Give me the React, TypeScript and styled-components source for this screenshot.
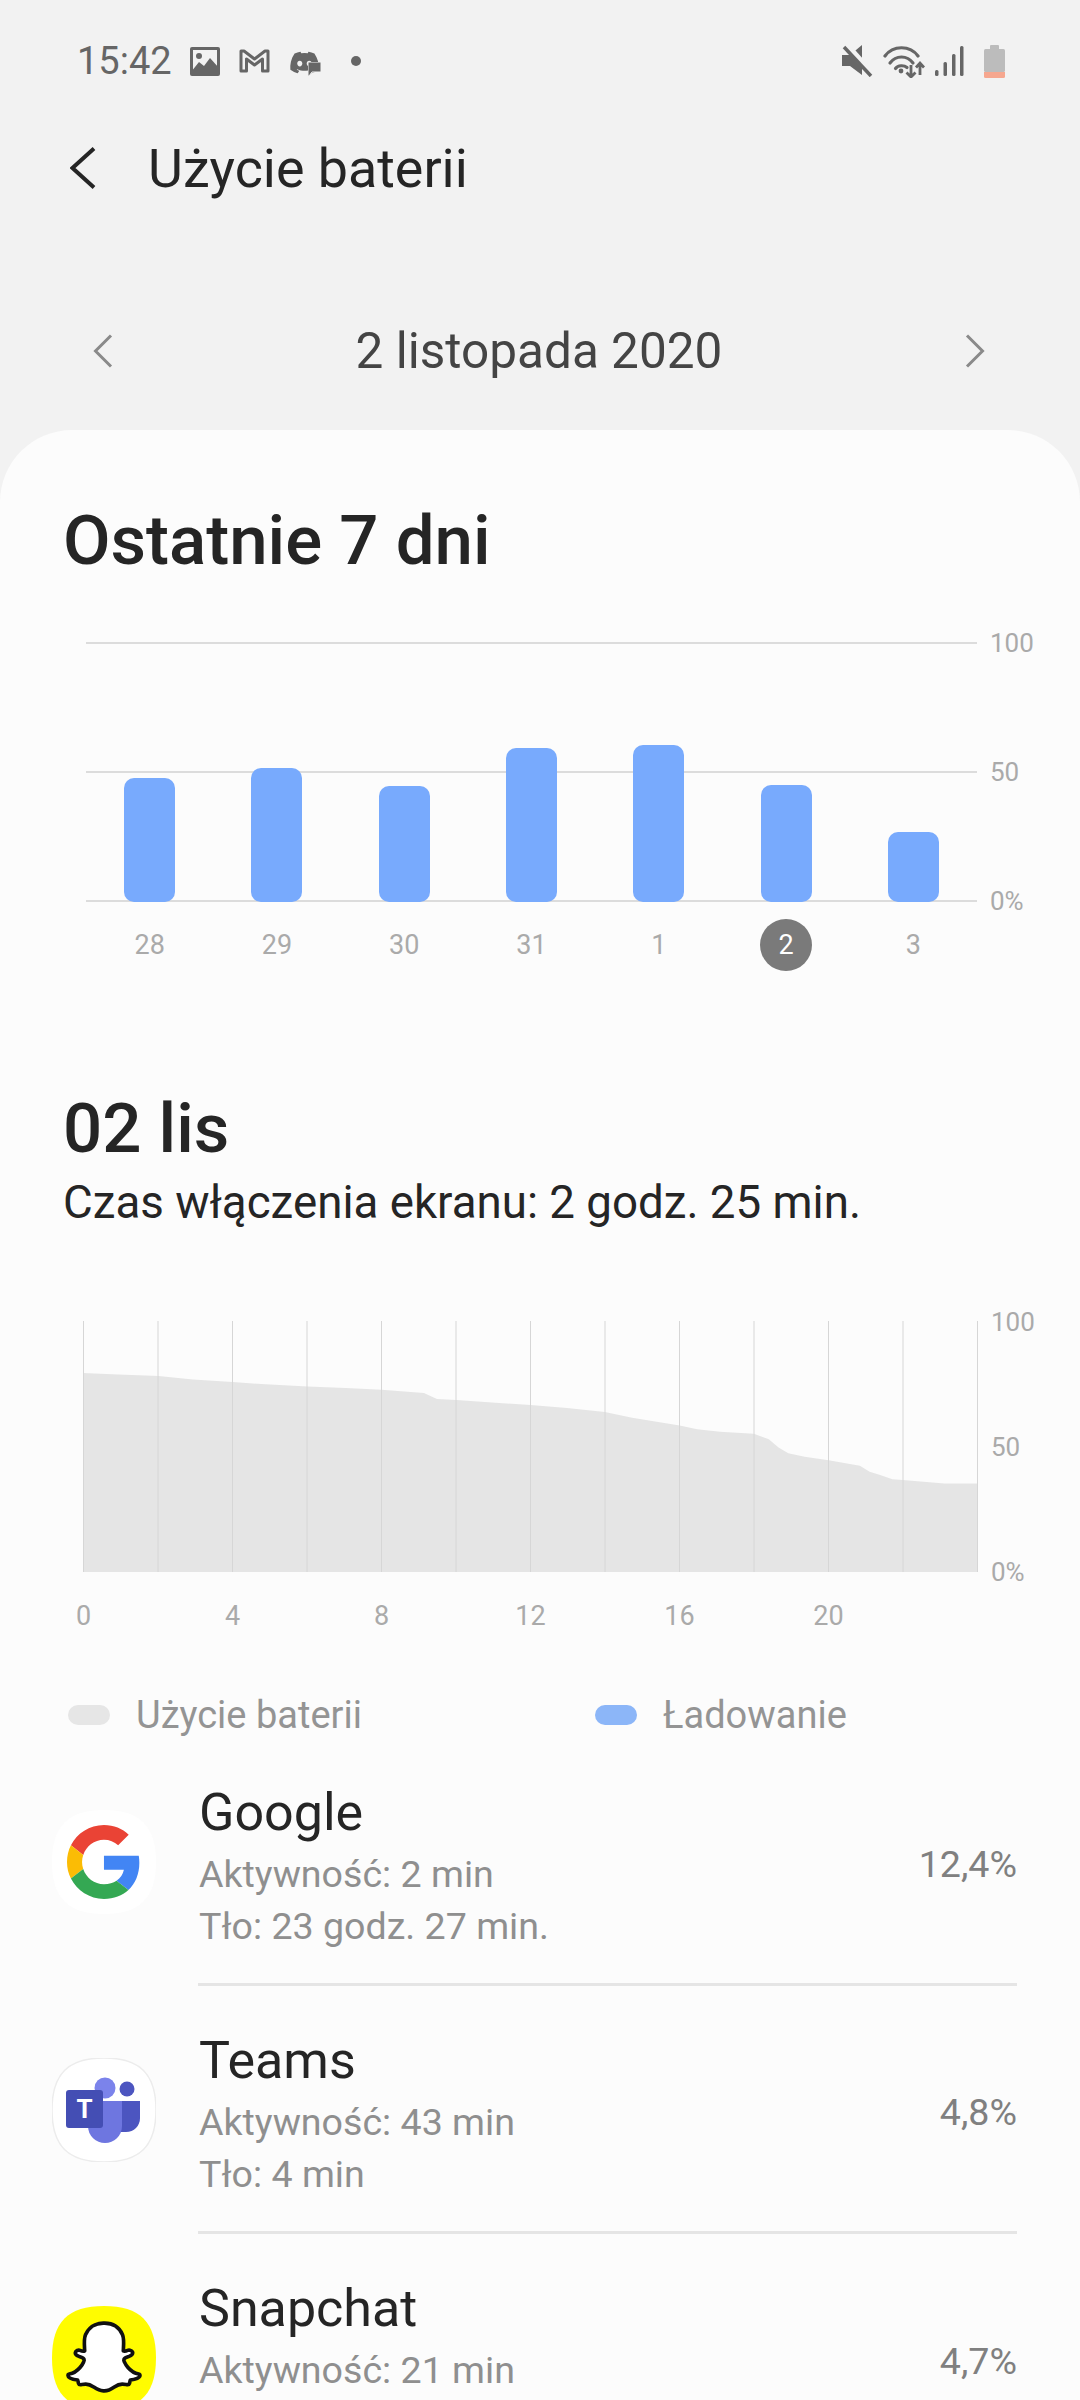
import React from 'react'
import styled, { createGlobalStyle } from 'styled-components'
import { FaDiscord, FaSnapchatGhost } from 'react-icons/fa'

const GlobalStyle = createGlobalStyle`
  html, body {
    margin: 0;
    padding: 0;
    background: #f2f2f2;
  }
  * {
    box-sizing: border-box;
  }
`

const Screen = styled.div`
  width: 1080px;
  height: 2400px;
  overflow: hidden;
  display: flex;
  flex-direction: column;
  background: #f2f2f2;
  font-family: Roboto, 'Liberation Sans', sans-serif;
  color: #252525;
`

const StatusBar = styled.div`
  height: 122px;
  display: flex;
  align-items: center;
  padding: 0 75px 0 77px;
  flex-shrink: 0;
`

const Clock = styled.span`
  font-size: 38px;
  color: #666;
  margin-right: 18px;
`

const StatusGroup = styled.div<{ $gap: number }>`
  display: flex;
  align-items: center;
  gap: ${({ $gap }) => $gap}px;
`

const Spacer = styled.div`
  flex: 1;
`

const NotifyDot = styled.span`
  width: 10px;
  height: 10px;
  margin-left: 12px;
  border-radius: 50%;
  background: #666;
`

const DiscordWrap = styled.span`
  position: relative;
  display: block;
  width: 31px;
  height: 28px;
  color: #666;

  svg {
    display: block;
  }
`

const ChatBadge = styled.svg`
  position: absolute;
  right: -1px;
  bottom: -1px;
`

const BatteryWrap = styled.span`
  display: block;
  margin-left: 10px;
`

const Header = styled.div`
  height: 92px;
  display: flex;
  align-items: center;
  padding-left: 70px;
  gap: 52px;
  flex-shrink: 0;
`

const HeaderTitle = styled.h1`
  margin: 0;
  font-size: 53.8px;
  font-weight: 400;
  color: #252525;
`

const DateRow = styled.div`
  height: 92px;
  margin: 91px 0 33px;
  padding: 0 95px 0 93px;
  display: flex;
  align-items: center;
  justify-content: space-between;
  flex-shrink: 0;
`

const DateText = styled.span`
  font-size: 49.5px;
  color: #444;
`

const Card = styled.main`
  flex: 1;
  background: #fcfcfc;
  border-radius: 72px 72px 0 0;
  min-height: 0;
`

const SectionTitle = styled.h2<{ $top: number }>`
  margin: ${({ $top }) => $top}px 0 0 63px;
  font-size: 69px;
  line-height: 80px;
  font-weight: 500;
  color: #252525;
`

const ChartRow = styled.div<{ $top: number; $left: number }>`
  display: flex;
  margin: ${({ $top }) => $top}px 0 0 ${({ $left }) => $left}px;
`

const BarPlot = styled.div`
  width: 891px;
  height: 260px;
  display: grid;
  grid-template-columns: repeat(7, 1fr);
  align-items: end;
  justify-items: center;
  background:
    linear-gradient(#dcdcdc, #dcdcdc) 0 0 / 100% 2px no-repeat,
    linear-gradient(#dcdcdc, #dcdcdc) 0 129px / 100% 2px no-repeat,
    linear-gradient(#dcdcdc, #dcdcdc) 0 258px / 100% 2px no-repeat;
`

const Bar = styled.div<{ $height: number }>`
  width: 51px;
  height: ${({ $height }) => $height}px;
  background: #78aafd;
  border-radius: 10px;
`

const YAxis = styled.div<{ $height: number }>`
  height: ${({ $height }) => $height}px;
  margin-left: 13px;
  display: flex;
  flex-direction: column;
  justify-content: space-between;
`

const YLabel = styled.span`
  height: 2px;
  line-height: 2px;
  font-size: 26px;
  color: #aaa;
`

const DayAxis = styled.div`
  width: 891px;
  height: 54px;
  margin: 16px 0 0 86px;
  display: grid;
  grid-template-columns: repeat(7, 1fr);
  justify-items: center;
  align-items: center;
`

const DayLabel = styled.span<{ $active?: boolean }>`
  width: 52px;
  height: 52px;
  border-radius: 50%;
  display: flex;
  align-items: center;
  justify-content: center;
  font-size: 27px;
  color: ${({ $active }) => ($active ? '#fff' : '#aaa')};
  background: ${({ $active }) => ($active ? '#7a7a7a' : 'transparent')};
`

const ScreenTime = styled.p`
  margin: 6px 0 0 63px;
  font-size: 45.7px;
  line-height: 56px;
  color: #252525;
`

const HourAxis = styled.div`
  display: grid;
  grid-template-columns: repeat(6, 149px);
  margin: 27px 0 0 9px;
  height: 32px;
`

const HourLabel = styled.span`
  text-align: center;
  font-size: 27px;
  line-height: 32px;
  color: #aaa;
`

const Legend = styled.div`
  display: flex;
  align-items: center;
  height: 50px;
  margin: 58px 0 0 68px;
`

const LegendItem = styled.div<{ $width: number }>`
  width: ${({ $width }) => $width}px;
  display: flex;
  align-items: center;
  gap: 26px;
`

const Swatch = styled.span<{ $color: string }>`
  width: 42px;
  height: 20px;
  border-radius: 10px;
  background: ${({ $color }) => $color};
`

const LegendText = styled.span`
  font-size: 38px;
  color: #949494;
`

const AppList = styled.div`
  margin-top: -2px;
`

const AppRow = styled.div`
  height: 248px;
  display: flex;
  align-items: center;
  padding: 0 63px 0 52px;
  gap: 42px;
`

const AppBody = styled.div<{ $divider: boolean }>`
  flex: 1;
  height: 100%;
  display: flex;
  align-items: center;
  justify-content: space-between;
  border-bottom: ${({ $divider }) => ($divider ? '3px solid #e5e5e5' : 'none')};
`

const AppText = styled.div`
  align-self: flex-start;
  padding-top: 45px;
  margin-left: 1px;
`

const AppName = styled.div`
  font-size: 52px;
  line-height: 60px;
  color: #252525;
`

const AppDetail = styled.div`
  font-size: 37.6px;
  line-height: 52px;
  color: #8f8f8f;
  &:nth-of-type(2) {
    margin-top: 5px;
  }
`

const AppPercent = styled.span`
  font-size: 37.6px;
  color: #808080;
  padding-top: 6px;
`

const IconBox = styled.div`
  position: relative;
  width: 104px;
  height: 104px;
  flex-shrink: 0;

  > svg {
    display: block;
  }
`

const GhostWrap = styled.span`
  position: absolute;
  left: 16px;
  top: 15px;
  display: block;
  width: 72px;
  height: 72px;

  svg {
    display: block;
    overflow: visible;
  }

  svg path {
    fill: #fff;
    stroke: #111;
    stroke-width: 26px;
    stroke-linejoin: round;
  }
`

const SQUIRCLE = 'M52 0C88 0 104 16 104 52C104 88 88 104 52 104C16 104 0 88 0 52C0 16 16 0 52 0Z'

const Chevron = ({ dir, color, w, h, sw }: { dir: 'l' | 'r'; color: string; w: number; h: number; sw: number }) => (
  <svg width={w} height={h} viewBox={`0 0 ${w} ${h}`} fill="none" stroke={color} strokeWidth={sw}>
    {dir === 'l' ? (
      <polyline points={`${w - 2},1.5 2.5,${h / 2} ${w - 2},${h - 1.5}`} />
    ) : (
      <polyline points={`2,1.5 ${w - 2.5},${h / 2} 2,${h - 1.5}`} />
    )}
  </svg>
)

const ImageIcon = () => (
  <svg width="30" height="29" viewBox="0 0 30 29">
    <rect width="30" height="29" rx="2" fill="#666" />
    <rect x="3" y="3" width="24" height="23" fill="#f2f2f2" />
    <circle cx="9" cy="9" r="3" fill="#666" />
    <path d="M1 25 L9 15 L14 19 L20 11 L29 21 V28 H1Z" fill="#666" />
  </svg>
)

const MailIcon = () => (
  <svg width="31" height="24" viewBox="0 0 31 24" fill="none" stroke="#666" strokeWidth="3" strokeLinejoin="round">
    <path d="M2 22V2H5L15.5 10L26 2H29V22H23.5V10L15.5 16L7.5 10V22Z" />
  </svg>
)

const MuteIcon = () => (
  <svg width="31" height="32" viewBox="0 0 31 32">
    <path d="M0 10H8L20 0V30L8 21H0Z" fill="#666" />
    <line x1="3" y1="-1" x2="30" y2="29" stroke="#f2f2f2" strokeWidth="7" />
    <line x1="2" y1="2" x2="29" y2="31" stroke="#666" strokeWidth="3.5" />
  </svg>
)

const WifiIcon = () => (
  <svg width="42" height="33" viewBox="0 0 42 33" fill="none" stroke="#666" strokeWidth="3.2" strokeLinecap="round">
    <path d="M2 11C10 0 27 0 35 11" />
    <path d="M7 18C13 10 24 10 30 18" />
    <path d="M12.5 23.5C15 20 21 20 24 22.5" />
    <circle cx="18" cy="26" r="2.4" fill="#666" stroke="none" />
    <path d="M28 20V32M23.5 27.5L28 32L32.5 27.5" strokeWidth="2.8" strokeLinecap="butt" />
    <path d="M37 30V18M33 22.5L37 18L41 22.5" strokeWidth="2.8" strokeLinecap="butt" />
  </svg>
)

const SignalIcon = () => (
  <svg width="29" height="30" viewBox="0 0 29 30" fill="#666">
    <rect x="0" y="24" width="3.5" height="6" rx="1.5" />
    <rect x="8.5" y="16" width="3.5" height="14" rx="1.5" />
    <rect x="17" y="8" width="3.5" height="22" rx="1.5" />
    <rect x="25" y="0" width="3.5" height="30" rx="1.5" />
  </svg>
)

const BatteryIcon = () => (
  <svg width="21" height="33" viewBox="0 0 21 33" display="block">
    <rect x="6" y="0" width="9" height="5" rx="1" fill="#bcbcbc" />
    <rect x="0" y="4" width="21" height="23" fill="#bcbcbc" rx="1.5" />
    <path d="M0 27H21V31.5Q21 33 19.5 33H1.5Q0 33 0 31.5Z" fill="#f6a78f" />
  </svg>
)

const GoogleIcon = () => (
  <IconBox>
    <svg width="104" height="104" viewBox="0 0 104 104">
      <path d={SQUIRCLE} fill="#fff" />
      <g transform="translate(15 15) scale(1.54)">
        <path fill="#EA4335" d="M24 9.5c3.54 0 6.71 1.22 9.21 3.6l6.85-6.85C35.9 2.38 30.47 0 24 0 14.62 0 6.51 5.38 2.56 13.22l7.98 6.19C12.43 13.72 17.74 9.5 24 9.5z" />
        <path fill="#4285F4" d="M46.98 24.55c0-1.57-.15-3.09-.38-4.55H24v9.02h12.94c-.58 2.96-2.26 5.48-4.78 7.18l7.73 6c4.51-4.18 7.09-10.36 7.09-17.65z" />
        <path fill="#FBBC05" d="M10.53 28.59c-.48-1.45-.76-2.99-.76-4.59s.27-3.14.76-4.59l-7.98-6.19C.92 16.46 0 20.12 0 24c0 3.88.92 7.54 2.56 10.78l7.97-6.19z" />
        <path fill="#34A853" d="M24 48c6.48 0 11.93-2.13 15.89-5.81l-7.73-6c-2.15 1.45-4.92 2.3-8.16 2.3-6.26 0-11.57-4.22-13.47-9.91l-7.98 6.19C6.51 42.62 14.62 48 24 48z" />
      </g>
    </svg>
  </IconBox>
)

const TeamsIcon = () => (
  <IconBox>
    <svg width="104" height="104" viewBox="0 0 104 104">
      <path d={SQUIRCLE} fill="#fff" stroke="#ececec" strokeWidth="1.5" />
      <circle cx="75" cy="31" r="7.5" fill="#4c55c0" />
      <path d="M64 43H88V60C88 68 82 74 74 74H64Z" fill="#4c55c0" />
      <circle cx="53" cy="30" r="10.5" fill="#7b83eb" />
      <path d="M36 43H70V68C70 78 62 85 53 85C44 85 36 78 36 68Z" fill="#6e76e0" />
      <rect x="14" y="32" width="37" height="38" rx="3" fill="#444eb4" />
      <text x="32.5" y="60" textAnchor="middle" fontFamily="Roboto, sans-serif" fontWeight="700" fontSize="26" fill="#fff">
        T
      </text>
    </svg>
  </IconBox>
)

const SnapIcon = () => (
  <IconBox>
    <svg width="104" height="104" viewBox="0 0 104 104">
      <path d={SQUIRCLE} fill="#fffc00" />
    </svg>
    <GhostWrap>
      <FaSnapchatGhost size={72} />
    </GhostWrap>
  </IconBox>
)

const CURVE: [number, number][] = [
  [66, 222], [120, 226], [182, 231], [235, 241], [296, 249], [340, 255], [411, 262], [470, 267],
  [525, 272], [590, 282], [610, 300], [640, 303], [700, 311], [754, 318], [810, 327], [868, 339],
  [910, 356], [983, 379], [1010, 390], [1045, 398], [1097, 404], [1120, 420], [1135, 445], [1150, 462],
  [1175, 473], [1212, 483], [1260, 500], [1275, 518], [1290, 527], [1310, 540], [1326, 542], [1390, 553],
  [1440, 553],
]

const UsageChart = () => {
  const area = `M66 818 L${CURVE.map(p => p.join(' ')).join(' L')} L1440 818Z`
  const sx = 894 / 1374
  const sy = 251 / 752
  return (
    <svg width="895" height="252" viewBox="0 0 895 252">
      <g transform={`scale(${sx} ${sy}) translate(-66 -66)`}>
        <path d={area} fill="#e5e5e5" />
      </g>
      {Array.from({ length: 13 }, (_, i) => (
        <line key={i} x1={0.5 + i * 74.5} x2={0.5 + i * 74.5} y1="0" y2="251" stroke="#d6d6d6" strokeWidth="1" />
      ))}
    </svg>
  )
}

const bars = [124, 134, 116, 154, 157, 117, 70]
const days = ['28', '29', '30', '31', '1', '2', '3']
const hours = ['0', '4', '8', '12', '16', '20']

const apps = [
  { name: 'Google', details: ['Aktywność: 2 min', 'Tło: 23 godz. 27 min.'], pct: '12,4%', icon: <GoogleIcon /> },
  { name: 'Teams', details: ['Aktywność: 43 min', 'Tło: 4 min'], pct: '4,8%', icon: <TeamsIcon /> },
  { name: 'Snapchat', details: ['Aktywność: 21 min'], pct: '4,7%', icon: <SnapIcon /> },
]

export default function App() {
  return (
    <Screen>
      <GlobalStyle />
      <StatusBar>
        <Clock>15:42</Clock>
        <StatusGroup $gap={19}>
          <ImageIcon />
          <MailIcon />
          <DiscordWrap>
            <FaDiscord size={31} />
            <ChatBadge width="13" height="14" viewBox="0 0 13 14">
              <path d="M0 0H13V10H4L1 14H0Z" fill="#666" stroke="#f2f2f2" strokeWidth="1" />
            </ChatBadge>
          </DiscordWrap>
          <NotifyDot />
        </StatusGroup>
        <Spacer />
        <StatusGroup $gap={10}>
          <MuteIcon />
          <WifiIcon />
          <SignalIcon />
          <BatteryWrap>
            <BatteryIcon />
          </BatteryWrap>
        </StatusGroup>
      </StatusBar>

      <Header>
        <Chevron dir="l" color="#252525" w={26} h={42} sw={4} />
        <HeaderTitle>Użycie baterii</HeaderTitle>
      </Header>

      <DateRow>
        <Chevron dir="l" color="#8a8a8a" w={20} h={34} sw={3} />
        <DateText>2 listopada 2020</DateText>
        <Chevron dir="r" color="#8a8a8a" w={20} h={34} sw={3} />
      </DateRow>

      <Card>
        <SectionTitle $top={71}>Ostatnie 7 dni</SectionTitle>
        <ChartRow $top={61} $left={86}>
          <BarPlot>
            {bars.map((h, i) => (
              <Bar key={i} $height={h} />
            ))}
          </BarPlot>
          <YAxis $height={260}>
            <YLabel>100</YLabel>
            <YLabel>50</YLabel>
            <YLabel>0%</YLabel>
          </YAxis>
        </ChartRow>
        <DayAxis>
          {days.map(d => (
            <DayLabel key={d} $active={d === '2'}>
              {d}
            </DayLabel>
          ))}
        </DayAxis>

        <SectionTitle $top={117}>02 lis</SectionTitle>
        <ScreenTime>Czas włączenia ekranu: 2 godz. 25 min.</ScreenTime>

        <ChartRow $top={90} $left={83}>
          <UsageChart />
          <YAxis $height={252}>
            <YLabel>100</YLabel>
            <YLabel>50</YLabel>
            <YLabel>0%</YLabel>
          </YAxis>
        </ChartRow>
        <HourAxis>
          {hours.map(h => (
            <HourLabel key={h}>{h}</HourLabel>
          ))}
        </HourAxis>

        <Legend>
          <LegendItem $width={527}>
            <Swatch $color="#e6e6e6" />
            <LegendText>Użycie baterii</LegendText>
          </LegendItem>
          <LegendItem $width={400}>
            <Swatch $color="#8cb6f8" />
            <LegendText>Ładowanie</LegendText>
          </LegendItem>
        </Legend>

        <AppList>
          {apps.map((a, i) => (
            <AppRow key={a.name}>
              {a.icon}
              <AppBody $divider={i < apps.length - 1}>
                <AppText>
                  <AppName>{a.name}</AppName>
                  {a.details.map(d => (
                    <AppDetail key={d}>{d}</AppDetail>
                  ))}
                </AppText>
                <AppPercent>{a.pct}</AppPercent>
              </AppBody>
            </AppRow>
          ))}
        </AppList>
      </Card>
    </Screen>
  )
}
